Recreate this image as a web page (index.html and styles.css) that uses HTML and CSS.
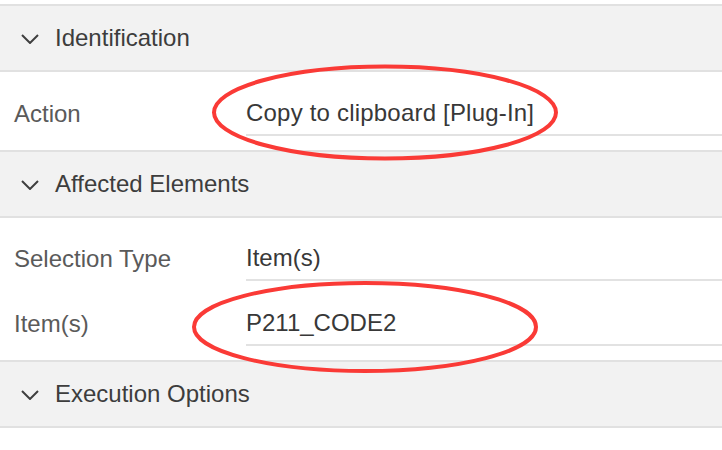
FILE: index.html
```html
<!DOCTYPE html>
<html lang="en">
<head>
<meta charset="utf-8">
<title>Dynamic Action</title>
<link rel="stylesheet" href="styles.css">
</head>
<body>
<div class="page">
  <div class="hdr">
    <svg class="chev" width="18" height="10" viewBox="0 0 18 10"><path d="M1 1 L9 9 L17 1" fill="none" stroke="#3f3f3f" stroke-width="2"/></svg>
    <span>Identification</span>
  </div>
  <div class="body first">
    <div class="row">
      <div class="label">Action</div>
      <div class="field wide">Copy to clipboard [Plug-In]</div>
    </div>
  </div>
  <div class="hdr">
    <svg class="chev" width="18" height="10" viewBox="0 0 18 10"><path d="M1 1 L9 9 L17 1" fill="none" stroke="#3f3f3f" stroke-width="2"/></svg>
    <span>Affected Elements</span>
  </div>
  <div class="body">
    <div class="row">
      <div class="label">Selection Type</div>
      <div class="field">Item(s)</div>
    </div>
    <div class="row">
      <div class="label">Item(s)</div>
      <div class="field">P211_CODE2</div>
    </div>
  </div>
  <div class="hdr">
    <svg class="chev" width="18" height="10" viewBox="0 0 18 10"><path d="M1 1 L9 9 L17 1" fill="none" stroke="#3f3f3f" stroke-width="2"/></svg>
    <span>Execution Options</span>
  </div>
  <svg class="marks" width="722" height="450" viewBox="0 0 722 450">
    <ellipse cx="385" cy="112.5" rx="171" ry="46" fill="none" stroke="#fa3a36" stroke-width="4"/>
    <ellipse cx="365" cy="327" rx="171" ry="44" fill="none" stroke="#fa3a36" stroke-width="4"/>
  </svg>
</div>
</body>
</html>
```

FILE: styles.css
```css
html, body {
  margin: 0;
  padding: 0;
  background: #ffffff;
}
body {
  font-family: "Liberation Sans", Arial, Helvetica, sans-serif;
  color: #3c3c3c;
}
.page {
  position: relative;
  width: 722px;
  height: 450px;
  padding-top: 4px;
  box-sizing: border-box;
  overflow: hidden;
}
.hdr {
  display: flex;
  align-items: center;
  height: 64px;
  background: #f2f2f2;
  border-top: 2px solid #e1e1e1;
  border-bottom: 2px solid #e1e1e1;
  font-size: 24px;
  color: #3d3d3d;
}
.chev {
  margin-left: 21px;
  margin-right: 16px;
  margin-top: 1px;
  flex: none;
}
.body {
  display: flex;
  flex-direction: column;
  gap: 20px;
  padding: 18px 0 14px 0;
}
.body.first {
  padding-top: 19px;
}
.row {
  display: flex;
  align-items: stretch;
}
.label {
  width: 232px;
  padding-left: 14px;
  display: flex;
  align-items: center;
  font-size: 24px;
  color: #5a5a5a;
  flex: none;
}
.field {
  flex: 1;
  height: 43px;
  display: flex;
  align-items: center;
  border-bottom: 2px solid #e2e2e2;
  font-size: 24px;
  color: #383838;
}
.field.wide {
  letter-spacing: 0.2px;
}
.marks {
  position: absolute;
  left: 0;
  top: 0;
  pointer-events: none;
}
```
